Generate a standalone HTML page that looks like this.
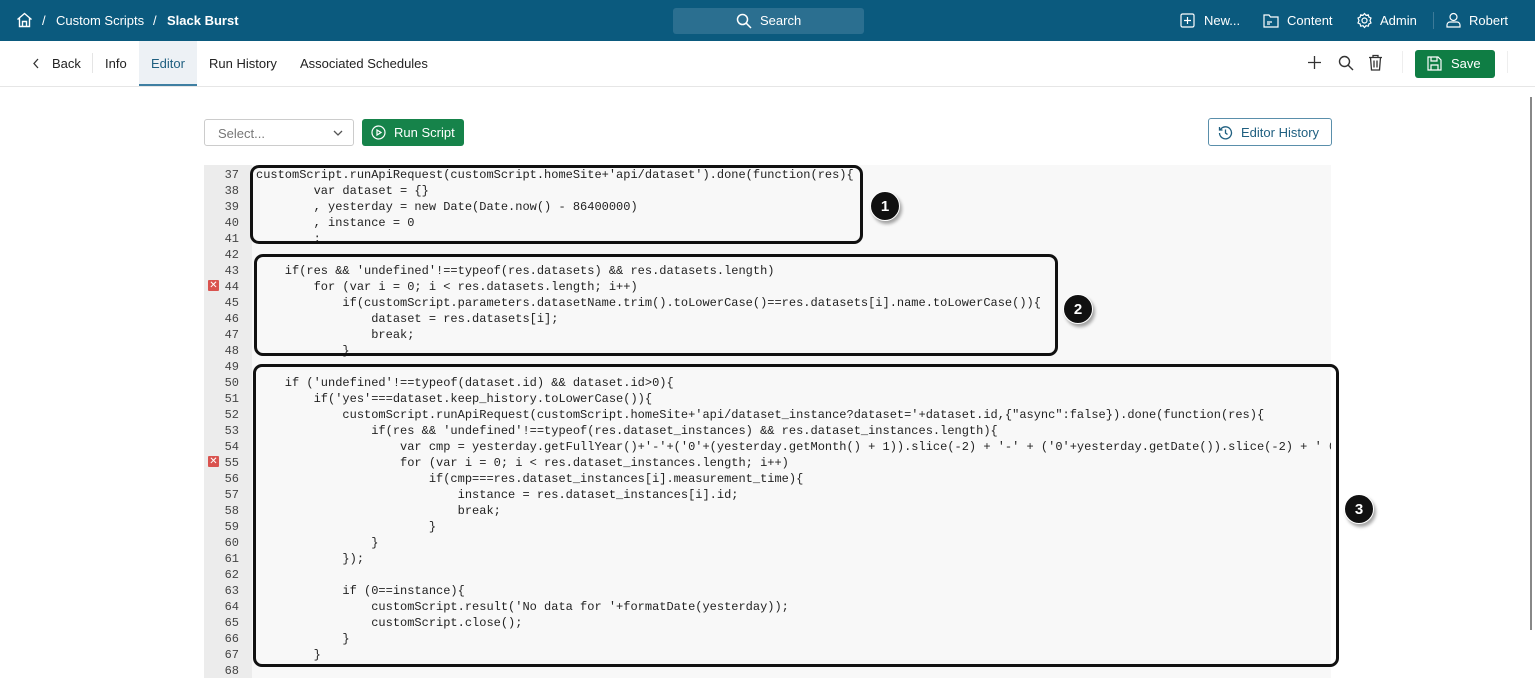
<!DOCTYPE html>
<html><head><meta charset="utf-8"><style>
*{margin:0;padding:0;box-sizing:border-box}
body{width:1535px;height:678px;overflow:hidden;background:#fff;font-family:"Liberation Sans",sans-serif;position:relative}
.nav{position:absolute;left:0;top:0;width:1535px;height:41px;background:#0b5a7e;color:#fff;font-size:13px}
.nav span{position:absolute;top:13px}
.search{position:absolute;left:673px;top:8px;width:191px;height:26px;background:#2b6f90;border-radius:3px}
.tabs{position:absolute;top:41px;left:0;width:1535px;height:46px;border-bottom:1px solid #e6e6e6;font-size:13px;color:#222}
.tabs span{position:absolute;top:15px}
.abs{position:absolute}
.code{position:absolute;left:204px;top:165px;width:1127px;height:513px;background:#f8f8f8;overflow:hidden}
.gut{position:absolute;left:0;top:0;width:48px;height:513px;background:#ececec}
pre{font-family:"Liberation Mono",monospace;font-size:12px;line-height:16px;color:#222;position:absolute;top:2px}
.ln{left:0;width:35px;text-align:right;color:#444}
.src{left:52px}
.box{position:absolute;border:3px solid #111;border-radius:9px}
.c{position:absolute;width:30px;height:30px;border-radius:50%;background:#111;color:#fff;font-weight:bold;font-size:15px;text-align:center;line-height:30px;box-shadow:2px 3px 3px rgba(0,0,0,.35);border:1px solid #fff}
</style></head><body>
<div class="nav">
<svg class="abs" style="left:16px;top:12px" width="17" height="16" viewBox="0 0 17 16" fill="none" stroke="#fff" stroke-width="1.4"><path d="M1.5 7.5L8.5 1.5L15.5 7.5M3.5 6v8.5h10V6M6.5 14.5v-5h4v5"/></svg>
<span style="left:42px">/</span><span style="left:56px">Custom Scripts</span><span style="left:153px">/</span><span style="left:167px;font-weight:bold">Slack Burst</span>
<div class="search"><svg class="abs" style="left:63px;top:5px" width="16" height="16" viewBox="0 0 16 16" fill="none" stroke="#fff" stroke-width="1.5"><circle cx="6.5" cy="6.5" r="5"/><path d="M10.2 10.2L15 15"/></svg><span style="left:87px;top:5px">Search</span></div>
<svg class="abs" style="left:1180px;top:13px" width="15" height="15" viewBox="0 0 15 15" fill="none" stroke="#fff" stroke-width="1.2"><rect x="1" y="1" width="13" height="13" rx="1.5"/><path d="M7.5 4v7M4 7.5h7"/></svg><span style="left:1204px">New...</span>
<svg class="abs" style="left:1263px;top:13px" width="16" height="15" viewBox="0 0 16 15" fill="none" stroke="#fff" stroke-width="1.2"><path d="M1 2h5l1.5 2H15v10H1z M4 9h5M4 11h3"/></svg><span style="left:1287px">Content</span>
<svg class="abs" style="left:1356px;top:12px" width="17" height="17" viewBox="0 0 17 17" fill="none" stroke="#fff" stroke-width="1.2"><circle cx="8.5" cy="8.5" r="2.5"/><path d="M8.5 1.5l1.5 1.8 2.3-.5.6 2.3 2.1 1-1 2.4 1 2.4-2.1 1-.6 2.3-2.3-.5-1.5 1.8-1.5-1.8-2.3.5-.6-2.3-2.1-1 1-2.4-1-2.4 2.1-1 .6-2.3 2.3.5z"/></svg><span style="left:1380px">Admin</span>
<div class="abs" style="left:1433px;top:12px;width:1px;height:17px;background:#3d7a98"></div>
<svg class="abs" style="left:1446px;top:12px" width="15" height="16" viewBox="0 0 15 16" fill="none" stroke="#fff" stroke-width="1.2"><circle cx="7.5" cy="5" r="3.5"/><path d="M1 15v-2a3 3 0 0 1 3-3h7a3 3 0 0 1 3 3v2z"/></svg><span style="left:1469px">Robert</span>
</div>
<div class="tabs">
<svg class="abs" style="left:32px;top:17px" width="8" height="11" viewBox="0 0 8 11" fill="none" stroke="#333" stroke-width="1.3"><path d="M6 1L2 5.5L6 10"/></svg>
<span style="left:52px">Back</span>
<div class="abs" style="left:92px;top:12px;width:1px;height:20px;background:#e5e5e5"></div>
<span style="left:105px">Info</span>
<div class="abs" style="left:139px;top:0;width:58px;height:45px;background:#edf1f5;border-bottom:2px solid #3f7fa2"></div>
<span style="left:151px;color:#1f5f80">Editor</span>
<span style="left:209px">Run History</span><span style="left:300px">Associated Schedules</span>
<svg class="abs" style="left:1308px;top:15px" width="13" height="13" viewBox="0 0 13 13" stroke="#333" stroke-width="1.3"><path d="M6.5 0v13M0 6.5h13"/></svg>
<svg class="abs" style="left:1338px;top:14px" width="16" height="16" viewBox="0 0 16 16" fill="none" stroke="#333" stroke-width="1.4"><circle cx="6.5" cy="6.5" r="5"/><path d="M10.2 10.2L15 15"/></svg>
<svg class="abs" style="left:1368px;top:13px" width="15" height="17" viewBox="0 0 15 17" fill="none" stroke="#333" stroke-width="1.3"><path d="M1 3.5h13M5 3.5V1.5h5v2M2.5 3.5l1 12.5h8l1-12.5M6 6.5v7M9 6.5v7"/></svg>
<div class="abs" style="left:1402px;top:10px;width:1px;height:22px;background:#eee"></div>
<div class="abs" style="left:1415px;top:9px;width:80px;height:28px;background:#0f7d44;border-radius:3px;color:#fff">
<svg class="abs" style="left:12px;top:6px" width="15" height="15" viewBox="0 0 15 15" fill="none" stroke="#fff" stroke-width="1.2"><path d="M1 1h10l3 3v10H1z M4 1v4h6V1 M4 14V9h7v5"/></svg><span style="left:36px;top:6px;color:#fff">Save</span></div>
<div class="abs" style="left:1507px;top:10px;width:1px;height:22px;background:#eee"></div>
</div>
<div class="abs" style="left:1530px;top:97px;width:2px;height:533px;background:#888"></div>
<div class="abs" style="left:204px;top:119px;width:150px;height:27px;border:1px solid #ccc;border-radius:3px;font-size:13px;color:#777"><span class="abs" style="left:13px;top:6px">Select...</span><svg class="abs" style="left:128px;top:10px" width="10" height="7" viewBox="0 0 10 7" fill="none" stroke="#555" stroke-width="1.3"><path d="M1 1l4 4 4-4"/></svg></div>
<div class="abs" style="left:362px;top:119px;width:102px;height:27px;background:#16834a;border-radius:3px;color:#fff;font-size:13px"><svg class="abs" style="left:9px;top:6px" width="15" height="15" viewBox="0 0 15 15" fill="none" stroke="#fff" stroke-width="1.2"><circle cx="7.5" cy="7.5" r="6.5"/><path d="M6 5l4 2.5-4 2.5z"/></svg><span class="abs" style="left:32px;top:6px">Run Script</span></div>
<div class="abs" style="left:1208px;top:118px;width:124px;height:28px;border:1px solid #5a8fab;border-radius:3px;color:#1f5f80;font-size:13px"><svg class="abs" style="left:9px;top:6px" width="15" height="15" viewBox="0 0 15 15" fill="none" stroke="#1f5f80" stroke-width="1.3"><path d="M2.5 4.5A6 6 0 1 1 1.5 8M1.5 2v3h3M7.5 4.5v3.5l2 1.5"/></svg><span class="abs" style="left:32px;top:6px">Editor History</span></div>
<div class="code"><div class="gut"></div>
<pre class="ln">37
38
39
40
41
42
43
44
45
46
47
48
49
50
51
52
53
54
55
56
57
58
59
60
61
62
63
64
65
66
67
68</pre>
<div class="abs" style="left:4px;top:115px;width:11px;height:11px;background:#d9534f;color:#fff;font-size:10px;line-height:11px;text-align:center;border-radius:1px">✕</div>
<div class="abs" style="left:4px;top:291px;width:11px;height:11px;background:#d9534f;color:#fff;font-size:10px;line-height:11px;text-align:center;border-radius:1px">✕</div>
<pre class="src">customScript.runApiRequest(customScript.homeSite+'api/dataset').done(function(res){
        var dataset = {}
        , yesterday = new Date(Date.now() - 86400000)
        , instance = 0
        ;

    if(res &amp;&amp; 'undefined'!==typeof(res.datasets) &amp;&amp; res.datasets.length)
        for (var i = 0; i &lt; res.datasets.length; i++)
            if(customScript.parameters.datasetName.trim().toLowerCase()==res.datasets[i].name.toLowerCase()){
                dataset = res.datasets[i];
                break;
            }

    if ('undefined'!==typeof(dataset.id) &amp;&amp; dataset.id&gt;0){
        if('yes'===dataset.keep_history.toLowerCase()){
            customScript.runApiRequest(customScript.homeSite+'api/dataset_instance?dataset='+dataset.id,{"async":false}).done(function(res){
                if(res &amp;&amp; 'undefined'!==typeof(res.dataset_instances) &amp;&amp; res.dataset_instances.length){
                    var cmp = yesterday.getFullYear()+'-'+('0'+(yesterday.getMonth() + 1)).slice(-2) + '-' + ('0'+yesterday.getDate()).slice(-2) + ' 00:00:00';
                    for (var i = 0; i &lt; res.dataset_instances.length; i++)
                        if(cmp===res.dataset_instances[i].measurement_time){
                            instance = res.dataset_instances[i].id;
                            break;
                        }
                }
            });

            if (0==instance){
                customScript.result('No data for '+formatDate(yesterday));
                customScript.close();
            }
        }</pre>
</div>
<div class="box" style="left:250px;top:165px;width:613px;height:79px"></div>
<div class="box" style="left:254px;top:254px;width:804px;height:102px"></div>
<div class="box" style="left:253px;top:364px;width:1086px;height:303px"></div>
<div class="c" style="left:870px;top:191px">1</div>
<div class="c" style="left:1063px;top:294px">2</div>
<div class="c" style="left:1344px;top:494px">3</div>
</body></html>
